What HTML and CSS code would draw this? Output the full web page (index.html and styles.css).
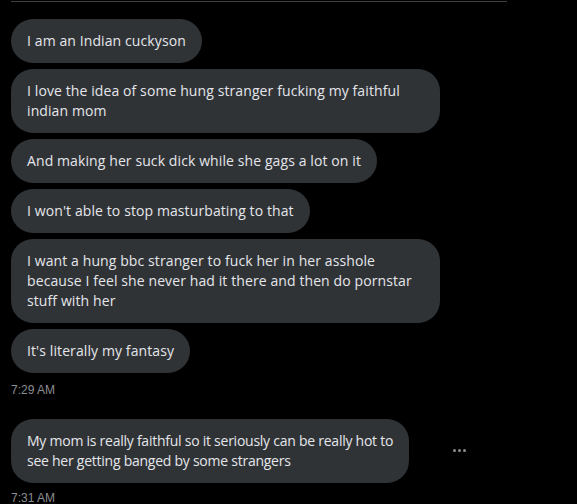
FILE: index.html
```html
<!DOCTYPE html>
<html>
<head>
<meta charset="utf-8">
<link rel="stylesheet" href="styles.css">
</head>
<body>
<div class="chat">
  <div class="divider"></div>
  <div class="group">
    <div class="bubble">I am an Indian cuckyson</div>
    <div class="bubble">I love the idea of some hung stranger fucking my faithful indian mom</div>
    <div class="bubble">And making her suck dick while she gags a lot on it</div>
    <div class="bubble">I won't able to stop masturbating to that</div>
    <div class="bubble">I want a hung bbc stranger to fuck her in her asshole because I feel she never had it there and then do pornstar stuff with her</div>
    <div class="bubble">It's literally my fantasy</div>
  </div>
  <div class="time">7:29 AM</div>
  <div class="row">
    <div class="bubble narrow">My mom is really faithful so it seriously can be really hot to<br>see her getting banged by some strangers</div>
    <div class="more"><span></span><span></span><span></span></div>
  </div>
  <div class="time last">7:31 AM</div>
</div>
</body>
</html>
```
FILE: styles.css
```css
html, body {
  margin: 0;
  padding: 0;
  background: #000;
  overflow: hidden;
}
.chat {
  padding: 0 11px;
  font-family: "Open Sans", "Noto Sans", sans-serif;
  width: 555px;
  height: 504px;
}
.divider {
  height: 1px;
  margin-top: 1px;
  width: 496px;
  background: #3e4042;
}
.group {
  display: flex;
  flex-direction: column;
  align-items: flex-start;
  gap: 6px;
  margin-top: 17px;
}
.bubble {
  background: #303336;
  color: #e4e6eb;
  font-size: 14px;
  letter-spacing: 0.1px;
  line-height: 20px;
  padding: 12px 16px;
  border-radius: 22px;
  max-width: 397px;
}
.bubble.narrow {
  max-width: none;
  letter-spacing: -0.25px;
  white-space: nowrap;
}
.time {
  color: #8a8d91;
  font-family: "Liberation Sans", sans-serif;
  font-size: 12px;
  line-height: 16px;
  margin-top: 9px;
}
.row {
  display: flex;
  align-items: center;
  margin-top: 21px;
}
.more {
  display: flex;
  gap: 2px;
  margin-left: 44px;
  margin-top: -1px;
}
.more span {
  width: 3px;
  height: 3px;
  border-radius: 50%;
  background: #8a8d91;
}
.time.last {
  margin-top: 7px;
}
```
